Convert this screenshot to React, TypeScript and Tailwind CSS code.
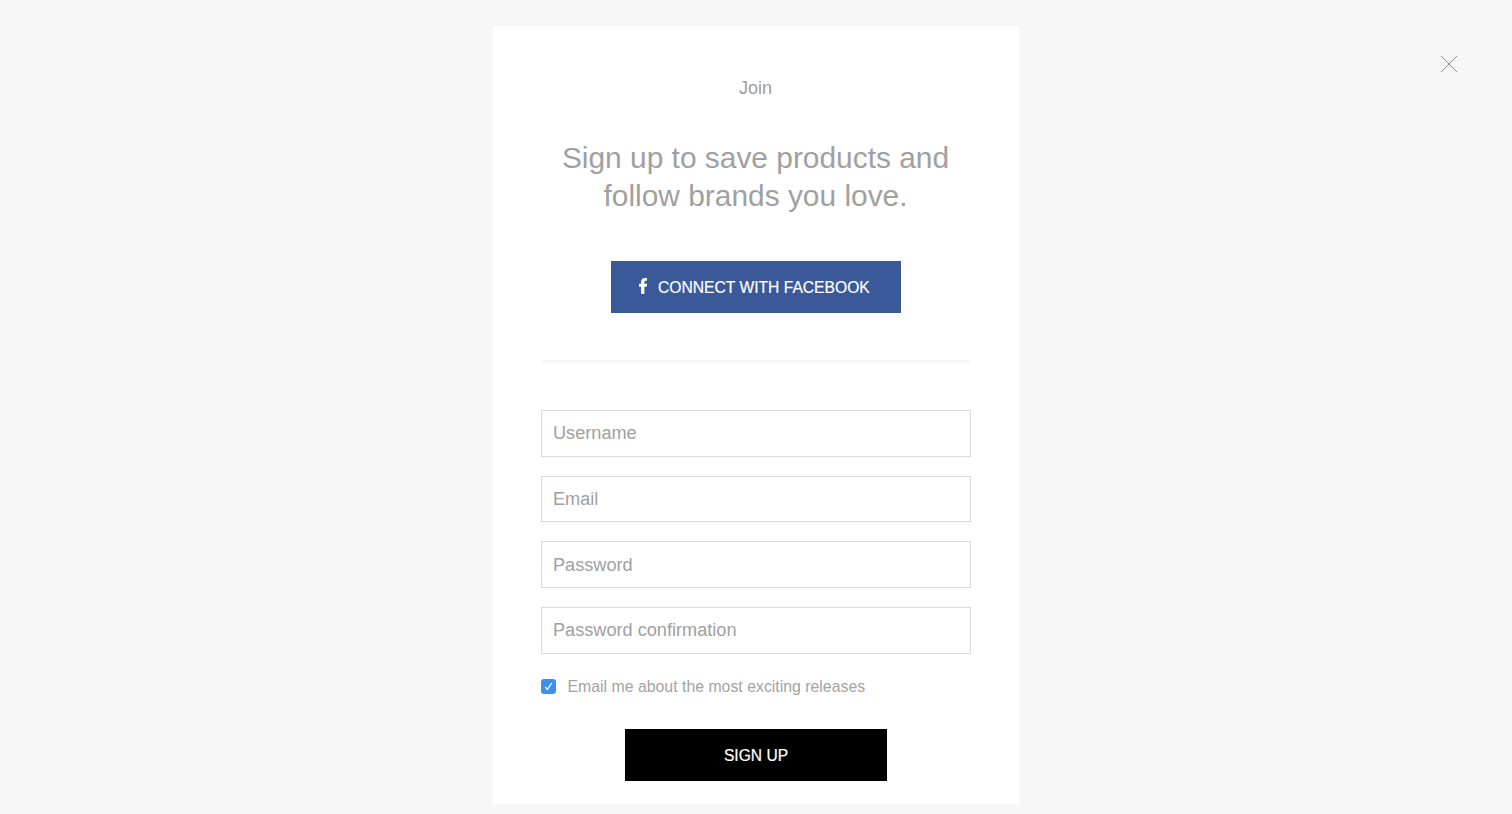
const fields = ["Username", "Email", "Password", "Password confirmation"];

export default function App() {
  return (
    <div className="relative h-[814px] overflow-hidden bg-[#f6f6f6] font-['Liberation_Sans',Arial,sans-serif] antialiased">
      {/* Close */}
      <button className="absolute left-[1440px] top-[55px] flex h-[18px] w-[18px] items-center justify-center text-[#8f8f8f]">
        <svg width="18" height="18" viewBox="0 0 18 18" fill="none" stroke="currentColor" strokeWidth="1">
          <path d="M1 1l16 16M17 1L1 17" />
        </svg>
      </button>

      <div className="mx-auto mt-[26px] flex h-[778px] w-[526px] flex-col items-center bg-white px-[48px]">
        <p className="mt-[50px] -translate-x-[0.5px] text-[18px] leading-[24px] text-[#9c9c9c]">Join</p>
        <h1 className="mt-[39px] -translate-x-[0.5px] text-center text-[29.9px] leading-[38px] text-[#a0a0a0]">
          Sign up to save products and
          <br />
          follow brands you love.
        </h1>

        <button className="mt-[46px] flex h-[52px] w-[290px] shrink-0 items-center gap-[11px] bg-[#3b5998] pl-[28px] text-[15.65px] text-white [-webkit-text-stroke:0.2px_white]">
          <svg width="8" height="16" viewBox="0 0 8 16" fill="white" className="-translate-y-px">
            <path d="M5.4 16V8.7h2.3l.3-2.9H5.4V4.1c0-.8.2-1.4 1.4-1.4H8V.1C7.7.1 6.9 0 5.9 0 3.6 0 2.1 1.3 2.1 3.8v2H0v2.9h2.1V16z" />
          </svg>
          <span className="pt-px">CONNECT WITH FACEBOOK</span>
        </button>

        <div className="mt-[47px] h-[3px] w-full shrink-0 bg-[#f6f6f6]" />

        <div className="mt-[47px] flex w-full flex-col gap-[19px]">
          {fields.map((field) => (
            <input
              key={field}
              placeholder={field}
              className="h-[46.67px] border border-[#d9d9d9] px-[11px] pt-px text-[18.15px] outline-none placeholder:text-[#a0a0a0]"
            />
          ))}
        </div>

        <label className="mt-[24px] flex h-[18px] w-full items-center gap-[11.5px] text-[15.85px] text-[#a3a3a3]">
          <span className="flex h-[15px] w-[15px] items-center justify-center rounded-[3px] bg-[#3b90ee]">
            <svg width="13" height="13" viewBox="0 0 13 13" fill="none" stroke="white" strokeWidth="1.3">
              <path d="M3.2 6.8l2.2 2.6 4.4-6.4" />
            </svg>
          </span>
          Email me about the most exciting releases
        </label>

        <button className="mt-[33.5px] h-[52px] w-[262.5px] shrink-0 bg-black pt-px text-[15.6px] text-white [-webkit-text-stroke:0.2px_white]">
          SIGN UP
        </button>
      </div>
    </div>
  );
}
